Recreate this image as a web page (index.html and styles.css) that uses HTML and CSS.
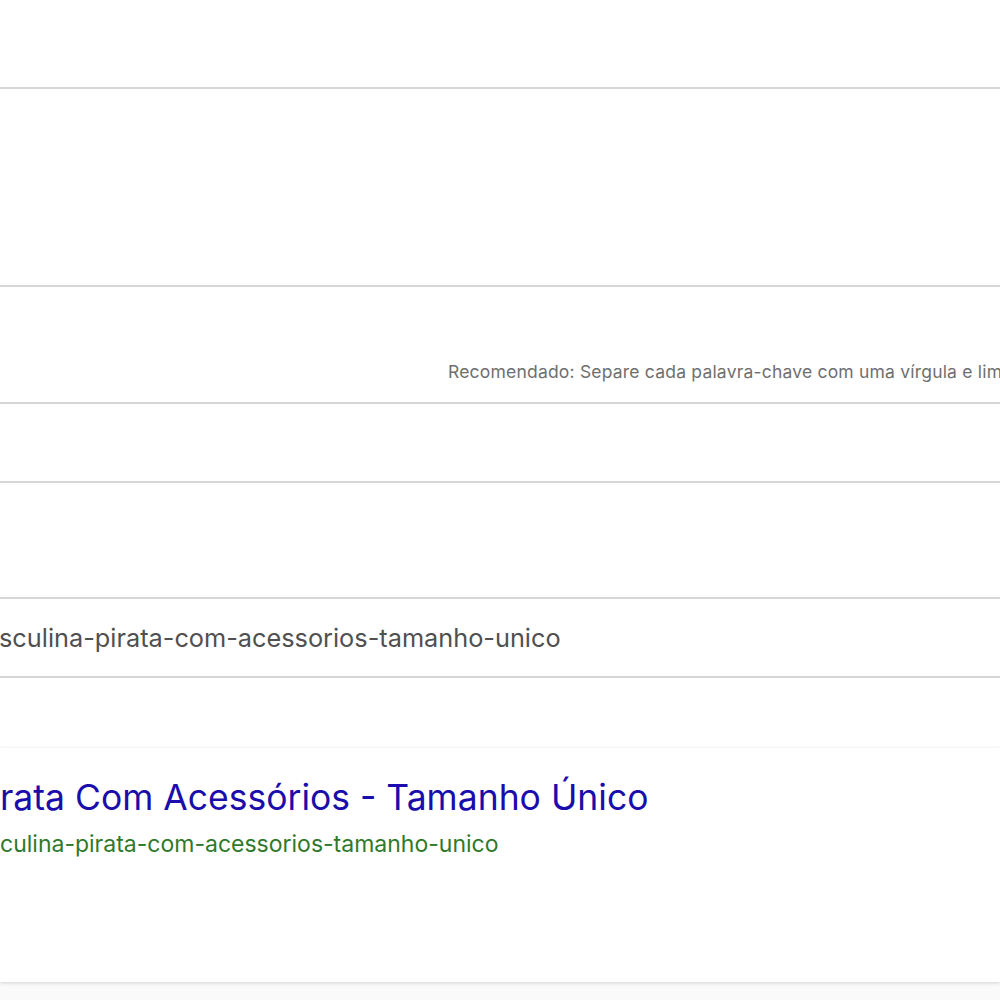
FILE: index.html
```html
<!DOCTYPE html>
<html lang="pt-BR">
<head>
<meta charset="utf-8">
<title>SEO</title>
<link rel="stylesheet" href="styles.css">
</head>
<body>
<div class="page">
  <div class="row row-top"></div>
  <div class="row row-desc"></div>
  <div class="row row-keywords">
    <span class="hint">Recomendado: Separe cada palavra-chave com uma vírgula e lim</span>
  </div>
  <div class="row row-a"></div>
  <div class="row row-b"></div>
  <div class="row row-slug">
    <span class="slug">sculina-pirata-com-acessorios-tamanho-unico</span>
  </div>
  <div class="gap"></div>
  <div class="preview">
    <div class="p-title">rata Com Acessórios - Tamanho Único</div>
    <div class="p-url">culina-pirata-com-acessorios-tamanho-unico</div>
  </div>
</div>
</body>
</html>
```
FILE: styles.css
```css
html, body {
  margin: 0;
  padding: 0;
  background: #fafafa;
}
body {
  width: 1000px;
  height: 1000px;
  overflow: hidden;
  font-family: Inter, "Liberation Sans", sans-serif;
}
.page {
  display: flex;
  flex-direction: column;
  background: #ffffff;
}
.row {
  border-bottom: 2px solid #d6d6d6;
  display: flex;
  white-space: nowrap;
  overflow: hidden;
  flex: none;
}
.row-top { height: 87px; }
.row-desc { height: 196px; }
.row-keywords {
  height: 96px;
  align-items: flex-end;
  padding-left: 448px;
  padding-bottom: 19px;
}
.hint {
  font-size: 17.5px;
  line-height: 22px;
  letter-spacing: 0.2px;
  color: #6f6f6f;
}
.row-a { height: 77px; }
.row-b { height: 114px; }
.row-slug {
  height: 77px;
  align-items: center;
}
.slug {
  font-size: 25.3px;
  line-height: 30px;
  color: #505050;
  margin-left: -1px;
}
.gap {
  height: 70px;
  flex: none;
  background: #ffffff;
}
.preview {
  height: 234px;
  flex: none;
  background: #ffffff;
  box-shadow: 0 1px 4px rgba(0, 0, 0, 0.16);
  padding-top: 30px;
  box-sizing: border-box;
  white-space: nowrap;
  position: relative;
}
.p-title {
  font-size: 35.5px;
  line-height: 40px;
  color: #1a0dab;
}
.p-url {
  font-size: 23px;
  line-height: 28px;
  color: #2f7a2a;
  margin-top: 12px;
}
```
